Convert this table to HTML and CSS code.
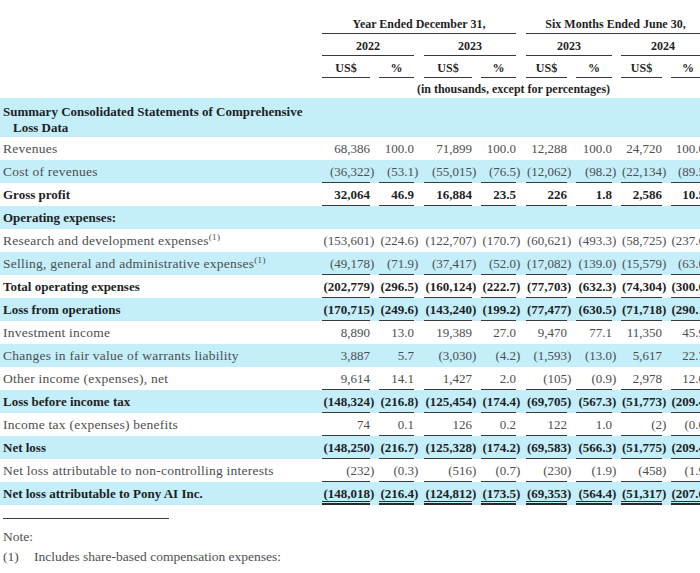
FILE: index.html
```html
<!DOCTYPE html>
<html lang="en">
<head>
<meta charset="utf-8">
<title>Summary Consolidated Statements of Comprehensive Loss Data</title>
<link rel="stylesheet" href="styles.css">
</head>
<body>
<table class="fin">
  <colgroup>
    <col class="c-label">
    <col class="c-amt"><col class="c-pct">
    <col class="c-amt"><col class="c-pct">
    <col class="c-amt2"><col class="c-pct2">
    <col class="c-amt3"><col class="c-pct3">
  </colgroup>
  <thead>
    <tr>
      <th></th>
      <th colspan="4" class="g10 ul">Year Ended December 31,</th>
      <th colspan="4" class="g10 ul">Six Months Ended June 30,</th>
    </tr>
    <tr>
      <th></th>
      <th colspan="2" class="g10 ul">2022</th>
      <th colspan="2" class="g10 ul">2023</th>
      <th colspan="2" class="g10 ul">2023</th>
      <th colspan="2" class="g9 ul">2024</th>
    </tr>
    <tr>
      <th></th>
      <th class="g10 ul">US$</th><th class="g9 ul">%</th>
      <th class="g10 ul">US$</th><th class="g9 ul">%</th>
      <th class="g10 ul">US$</th><th class="g9 ul">%</th>
      <th class="g9 ul">US$</th><th class="g9 ul">%</th>
    </tr>
    <tr class="last-head">
      <th></th>
      <th colspan="8" class="g10">(in thousands, except for percentages)</th>
    </tr>
  </thead>
  <tbody>
    <tr class="alt">
      <td colspan="9" class="section">Summary Consolidated Statements of Comprehensive<br>Loss Data</td>
    </tr>
    <tr>
      <td class="lbl">Revenues</td>
      <td class="n">68,386</td><td class="n p">100.0</td>
      <td class="n">71,899</td><td class="n p">100.0</td>
      <td class="n">12,288</td><td class="n p">100.0</td>
      <td class="n q">24,720</td><td class="n p">100.0</td>
    </tr>
    <tr class="alt u">
      <td class="lbl">Cost of revenues</td>
      <td class="n">(36,322<span class="cp">)</span></td><td class="n p">(53.1<span class="cp">)</span></td>
      <td class="n">(55,015<span class="cp">)</span></td><td class="n p">(76.5<span class="cp">)</span></td>
      <td class="n">(12,062<span class="cp">)</span></td><td class="n p">(98.2<span class="cp">)</span></td>
      <td class="n q">(22,134<span class="cp">)</span></td><td class="n p">(89.5<span class="cp">)</span></td>
    </tr>
    <tr class="b u">
      <td class="lbl">Gross profit</td>
      <td class="n">32,064</td><td class="n p">46.9</td>
      <td class="n">16,884</td><td class="n p">23.5</td>
      <td class="n">226</td><td class="n p">1.8</td>
      <td class="n q">2,586</td><td class="n p">10.5</td>
    </tr>
    <tr class="alt b">
      <td class="lbl">Operating expenses:</td>
      <td class="n"></td><td class="n p"></td>
      <td class="n"></td><td class="n p"></td>
      <td class="n"></td><td class="n p"></td>
      <td class="n q"></td><td class="n p"></td>
    </tr>
    <tr>
      <td class="lbl">Research and development expenses<sup class="ref">(1)</sup></td>
      <td class="n">(153,601<span class="cp">)</span></td><td class="n p">(224.6<span class="cp">)</span></td>
      <td class="n">(122,707<span class="cp">)</span></td><td class="n p">(170.7<span class="cp">)</span></td>
      <td class="n">(60,621<span class="cp">)</span></td><td class="n p">(493.3<span class="cp">)</span></td>
      <td class="n q">(58,725<span class="cp">)</span></td><td class="n p">(237.6<span class="cp">)</span></td>
    </tr>
    <tr class="alt u">
      <td class="lbl">Selling, general and administrative expenses<sup class="ref">(1)</sup></td>
      <td class="n">(49,178<span class="cp">)</span></td><td class="n p">(71.9<span class="cp">)</span></td>
      <td class="n">(37,417<span class="cp">)</span></td><td class="n p">(52.0<span class="cp">)</span></td>
      <td class="n">(17,082<span class="cp">)</span></td><td class="n p">(139.0<span class="cp">)</span></td>
      <td class="n q">(15,579<span class="cp">)</span></td><td class="n p">(63.0<span class="cp">)</span></td>
    </tr>
    <tr class="b u">
      <td class="lbl">Total operating expenses</td>
      <td class="n">(202,779<span class="cp">)</span></td><td class="n p">(296.5<span class="cp">)</span></td>
      <td class="n">(160,124<span class="cp">)</span></td><td class="n p">(222.7<span class="cp">)</span></td>
      <td class="n">(77,703<span class="cp">)</span></td><td class="n p">(632.3<span class="cp">)</span></td>
      <td class="n q">(74,304<span class="cp">)</span></td><td class="n p">(300.6<span class="cp">)</span></td>
    </tr>
    <tr class="alt b u">
      <td class="lbl">Loss from operations</td>
      <td class="n">(170,715<span class="cp">)</span></td><td class="n p">(249.6<span class="cp">)</span></td>
      <td class="n">(143,240<span class="cp">)</span></td><td class="n p">(199.2<span class="cp">)</span></td>
      <td class="n">(77,477<span class="cp">)</span></td><td class="n p">(630.5<span class="cp">)</span></td>
      <td class="n q">(71,718<span class="cp">)</span></td><td class="n p">(290.1<span class="cp">)</span></td>
    </tr>
    <tr>
      <td class="lbl">Investment income</td>
      <td class="n">8,890</td><td class="n p">13.0</td>
      <td class="n">19,389</td><td class="n p">27.0</td>
      <td class="n">9,470</td><td class="n p">77.1</td>
      <td class="n q">11,350</td><td class="n p">45.9</td>
    </tr>
    <tr class="alt">
      <td class="lbl">Changes in fair value of warrants liability</td>
      <td class="n">3,887</td><td class="n p">5.7</td>
      <td class="n">(3,030<span class="cp">)</span></td><td class="n p">(4.2<span class="cp">)</span></td>
      <td class="n">(1,593<span class="cp">)</span></td><td class="n p">(13.0<span class="cp">)</span></td>
      <td class="n q">5,617</td><td class="n p">22.7</td>
    </tr>
    <tr class="u">
      <td class="lbl">Other income (expenses), net</td>
      <td class="n">9,614</td><td class="n p">14.1</td>
      <td class="n">1,427</td><td class="n p">2.0</td>
      <td class="n">(105<span class="cp">)</span></td><td class="n p">(0.9<span class="cp">)</span></td>
      <td class="n q">2,978</td><td class="n p">12.0</td>
    </tr>
    <tr class="alt b u">
      <td class="lbl">Loss before income tax</td>
      <td class="n">(148,324<span class="cp">)</span></td><td class="n p">(216.8<span class="cp">)</span></td>
      <td class="n">(125,454<span class="cp">)</span></td><td class="n p">(174.4<span class="cp">)</span></td>
      <td class="n">(69,705<span class="cp">)</span></td><td class="n p">(567.3<span class="cp">)</span></td>
      <td class="n q">(51,773<span class="cp">)</span></td><td class="n p">(209.4<span class="cp">)</span></td>
    </tr>
    <tr class="u">
      <td class="lbl">Income tax (expenses) benefits</td>
      <td class="n">74</td><td class="n p">0.1</td>
      <td class="n">126</td><td class="n p">0.2</td>
      <td class="n">122</td><td class="n p">1.0</td>
      <td class="n q">(2<span class="cp">)</span></td><td class="n p">(0.0<span class="cp">)</span></td>
    </tr>
    <tr class="alt b u">
      <td class="lbl">Net loss</td>
      <td class="n">(148,250<span class="cp">)</span></td><td class="n p">(216.7<span class="cp">)</span></td>
      <td class="n">(125,328<span class="cp">)</span></td><td class="n p">(174.2<span class="cp">)</span></td>
      <td class="n">(69,583<span class="cp">)</span></td><td class="n p">(566.3<span class="cp">)</span></td>
      <td class="n q">(51,775<span class="cp">)</span></td><td class="n p">(209.4<span class="cp">)</span></td>
    </tr>
    <tr class="u">
      <td class="lbl">Net loss attributable to non-controlling interests</td>
      <td class="n">(232<span class="cp">)</span></td><td class="n p">(0.3<span class="cp">)</span></td>
      <td class="n">(516<span class="cp">)</span></td><td class="n p">(0.7<span class="cp">)</span></td>
      <td class="n">(230<span class="cp">)</span></td><td class="n p">(1.9<span class="cp">)</span></td>
      <td class="n q">(458<span class="cp">)</span></td><td class="n p">(1.9<span class="cp">)</span></td>
    </tr>
    <tr class="alt b uu">
      <td class="lbl">Net loss attributable to Pony AI Inc.</td>
      <td class="n">(148,018<span class="cp">)</span></td><td class="n p">(216.4<span class="cp">)</span></td>
      <td class="n">(124,812<span class="cp">)</span></td><td class="n p">(173.5<span class="cp">)</span></td>
      <td class="n">(69,353<span class="cp">)</span></td><td class="n p">(564.4<span class="cp">)</span></td>
      <td class="n q">(51,317<span class="cp">)</span></td><td class="n p">(207.6<span class="cp">)</span></td>
    </tr>
  </tbody>
</table>

<div class="notes">
  <div class="rule"></div>
  <p class="note">Note:</p>
  <p class="fn"><span class="fn-num">(1)</span><span>Includes share-based compensation expenses:</span></p>
</div>
</body>
</html>
```

FILE: styles.css
```css
html, body {
  margin: 0;
  padding: 0;
  overflow: hidden;
  background: #ffffff;
}

body {
  font-family: "Liberation Serif", "Times New Roman", serif;
  color: #4e4e4e;
  width: 700px;
}

.fin {
  border-collapse: separate;
  border-spacing: 0;
  table-layout: fixed;
  width: 705px;
  margin-top: 12px;
}

.c-label { width: 312px; }
.c-amt { width: 58px; }
.c-pct { width: 44px; }
.c-amt2 { width: 51px; }
.c-pct2 { width: 45px; }
.c-amt3 { width: 50px; }
.c-pct3 { width: 43px; }

/* header */
.fin th {
  font-size: 12px;
  font-weight: bold;
  color: #1f1f1f;
  line-height: 19px;
  padding: 3px 0 0 0;
  text-align: center;
  white-space: nowrap;
}

.fin .last-head th {
  line-height: 17px;
}

.fin th.g10 { padding-left: 10px; }
.fin th.g9 { padding-left: 9px; }

.fin th.ul {
  background: linear-gradient(#3a3a3a, #3a3a3a) right bottom / 100% 1px no-repeat content-box;
}

/* body */
.fin td {
  padding: 0;
  height: 23px;
  line-height: 23px;
  font-size: 13px;
  white-space: nowrap;
}

.fin td.lbl {
  padding-left: 3px;
  font-size: 13.5px;
  letter-spacing: 0.25px;
}

.fin td.section {
  height: auto;
  padding: 6px 0 1px 13px;
  text-indent: -10px;
  line-height: 16px;
  font-size: 13px;
  font-weight: bold;
  color: #1f1f1f;
}

.fin td.n {
  text-align: right;
  padding-left: 10px;
}

.fin td.n.p,
.fin td.n.q {
  padding-left: 9px;
}

.cp {
  margin-right: -0.333em;
}

.fin tr.alt {
  background: #c3eefa;
}

.fin tr.b td {
  font-weight: bold;
  color: #1f1f1f;
}

.fin tr.b td.lbl {
  font-size: 13px;
  letter-spacing: 0;
}

.fin tr.u td.n {
  background: linear-gradient(#3a3a3a, #3a3a3a) right bottom / 100% 1px no-repeat content-box;
}

.fin tr.uu td.n {
  background:
    linear-gradient(#2a2a2a, #2a2a2a) right bottom / 100% 2px no-repeat content-box,
    linear-gradient(#2a2a2a, #2a2a2a) right calc(100% - 3px) / 100% 1px no-repeat content-box;
}

.ref {
  font-size: 9px;
  line-height: 1;
  vertical-align: 5px;
  letter-spacing: 0.3px;
}

/* notes */
.notes {
  padding-left: 3px;
  margin-top: 13px;
  font-size: 13.5px;
}

.rule {
  width: 166px;
  height: 1px;
  background: #3a3a3a;
}

.note {
  margin: 8px 0 0 0;
  line-height: 20px;
}

.fn {
  margin: 0;
  line-height: 20px;
  display: flex;
}

.fn-num {
  width: 31px;
}
```
